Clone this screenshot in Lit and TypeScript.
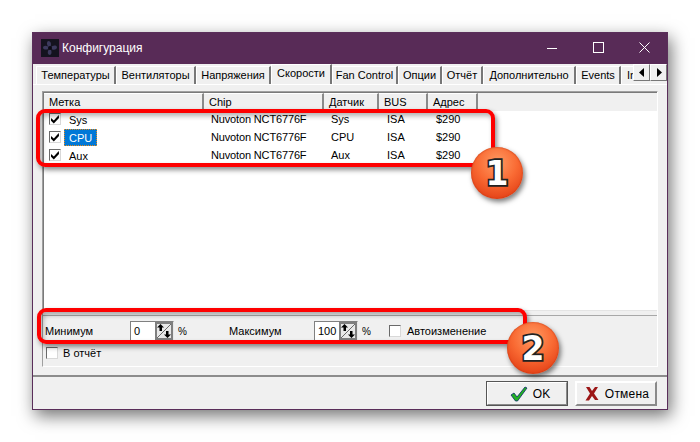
import { LitElement, html, css, svg } from "lit";
import { customElement } from "lit/decorators.js";

const TABS: [string, number][] = [
  ["Температуры", 80], ["Вентиляторы", 80], ["Напряжения", 75], ["Скорости", 61], ["Fan Control", 66],
  ["Опции", 44], ["Отчёт", 41], ["Дополнительно", 93], ["Events", 45],
];
const COLS: [string, number][] = [["Метка", 160], ["Chip", 120], ["Датчик", 55], ["BUS", 49], ["Адрес", 50]];
const ROWS = ["Sys", "CPU", "Aux"];

const tick = svg`<path d="M2 5 L4.8 7.4 L9.8 2 L10 5 L4.8 10.6 L2 7.8 Z" fill="#000"/>`;

@customElement("app-root")
export class AppRoot extends LitElement {
  static styles = css`
    :host { display: block; position: relative; width: 700px; height: 442px; overflow: hidden; background: #fff;
      font: 11px "Liberation Sans", Arial, sans-serif; color: #000; }
    .stage { padding: 32px; box-sizing: border-box; height: 442px; }
    .window { width: 636px; height: 378px; box-sizing: border-box; background: #f0f0f0; border: 1px solid #5a2e5a;
      display: flex; flex-direction: column; box-shadow: 3px 6px 16px rgba(0,0,0,.55); }
    .title { height: 31px; flex: none; background: #582b57; display: flex; align-items: center; color: #fff;
      font-size: 12px; padding-left: 8px; padding-bottom: 2px; box-sizing: border-box; }
    .title .ico { width: 18px; height: 18px; margin-right: 3px; }
    .title .name { flex: 1; }
    .wc { width: 46px; height: 28px; display: flex; align-items: center; justify-content: center; }
    .wc svg { display: block; }
    .tabs { display: flex; height: 20px; flex: none; align-items: flex-end; }
    .tabstrip { flex: 1; min-width: 0; display: flex; padding-left: 3px; height: 20px; align-items: flex-end; }
    .tab { flex: none; box-sizing: border-box; height: 18px; line-height: 17px; text-align: center; white-space: nowrap;
      background: #f0f0f0; border-top: 1px solid #fff; border-left: 1px solid #fff; border-right: 2px solid #777; }
    .tab.active { height: 20px; line-height: 17px; }
    .tab.last { border-right: 0; padding-left: 5px; text-align: left; width: 12px; }
    .arrows { flex: none; display: flex; align-self: flex-start; height: 17px; position: relative; z-index: 1; }
    .arrow { width: 17px; height: 17px; box-sizing: border-box; background: #f0f0f0; display: flex; align-items: center; justify-content: center;
      border-top: 1px solid #fff; border-left: 1px solid #fff; border-right: 1px solid #777; border-bottom: 1px solid #777; }
    .page { flex: 1; min-height: 0; padding: 6px 9px 8px 9px; display: flex; flex-direction: column; border-top: 1px solid #fff; }
    .frame { flex: 1; min-height: 0; display: flex; flex-direction: column; border-right: 1px solid #fff; border-bottom: 1px solid #fff; border-left: 1px solid #a0a0a0; border-top: 1px solid #a0a0a0; }
    .list { height: 219px; flex: none; box-sizing: border-box; background: #fff; border-top: 1px solid #7a7a7a; border-left: 1px solid #7a7a7a; border-bottom: 1px solid #e4e4e4; display: flex; flex-direction: column; }
    .head { display: flex; height: 18px; flex: none; background: #f0f0f0; }
    .hcell { flex: none; box-sizing: border-box; padding-left: 5px; line-height: 17px; border-right: 2px solid #8a8a8a; border-top: 1px solid #fff; }
    .rows { margin-top: -1px; }
    .row { display: flex; height: 18px; align-items: center; }
    .c0 { width: 160px; display: flex; align-items: center; padding-left: 5px; box-sizing: border-box; }
    .c1 { width: 120px; padding-left: 7px; box-sizing: border-box; letter-spacing: -.15px; }
    .c2 { width: 55px; padding-left: 7px; box-sizing: border-box; }
    .c3 { width: 49px; padding-left: 8px; box-sizing: border-box; }
    .c4 { width: 50px; padding-left: 8px; box-sizing: border-box; }
    .check { width: 12px; height: 12px; box-sizing: border-box; flex: none; background: #fff; border: 1px solid; border-color: #6a6a6a #d8d8d8 #d8d8d8 #6a6a6a; display: block; }
    .check svg { display: block; margin: -1px 0 0 -1px; }
    .rlabel { margin-left: 3px; padding: 0 4px; height: 17px; line-height: 16px; box-sizing: border-box; border: 1px solid transparent; }
    .rlabel.sel { background: #0078d7; color: #fff; border: 1px dotted #e88a1a; }
    .bar { border-top: 1px solid #a8a8a8; margin-top: 4px; flex: none; height: 24px; display: flex; align-items: center; padding-left: 2px; padding-top: 3px; }
    .lmin, .lmax { width: 85px; flex: none; }
    .spin { width: 44px; height: 20px; box-sizing: border-box; flex: none; background: #fff; display: flex; justify-content: space-between; align-items: center;
      border: 1px solid; border-color: #808080 #e8e8e8 #e8e8e8 #808080; padding-left: 3px; font-size: 11px; }
    .spin svg { display: block; }
    .pct1 { width: 51px; flex: none; margin-left: 4px; font-size: 10px; }
    .pct2 { width: 27px; flex: none; margin-left: 4px; font-size: 10px; }
    .auto { margin-left: 6px; }
    .report { display: flex; align-items: center; gap: 5px; padding: 4px 0 0 3px; }
    .foot { height: 34px; flex: none; box-sizing: border-box; border-top: 2px solid #8c8c8c; display: flex; justify-content: flex-end; gap: 7px; padding: 4px 10px 0 0; }
    .btn { width: 82px; height: 25px; box-sizing: border-box; display: flex; align-items: center; justify-content: center; gap: 5px; font-size: 12px; background: #f0f0f0;
      border: 2px solid; border-color: #fff #8a8a8a #8a8a8a #fff; }
    .btn.def { outline: 1px solid #555; outline-offset: -1px; padding-left: 6px; }
    .btn.cancel { padding-left: 2px; letter-spacing: .2px; gap: 6px; }
    .mark { position: absolute; box-sizing: border-box; border: 4px solid #fe0000; border-radius: 9px;
      box-shadow: 2px 3px 5px rgba(0,0,0,.45), inset 2px 3px 5px rgba(0,0,0,.3); pointer-events: none; }
    .m1 { left: 36px; top: 109px; width: 459px; height: 58px; }
    .m2 { left: 37px; top: 308px; width: 490px; height: 36px; }
    .badge { position: absolute; width: 52px; height: 52px; border-radius: 50%; display: flex; align-items: center; justify-content: center;
      background: radial-gradient(circle at 50% 30%, #ff9a62 0%, #f96a33 45%, #e03a12 90%);
      box-shadow: 2px 3px 5px rgba(0,0,0,.5), inset 0 0 2px #b8300c;
      font: bold 33px "DejaVu Sans", sans-serif; color: #fff; -webkit-text-stroke: 3.5px #222; paint-order: stroke fill; }
    .b1 { left: 471px; top: 147px; }
    .b2 { left: 507px; top: 322px; }
  `;

  private check(on: boolean) {
    return html`<span class="check">${on ? html`<svg width="12" height="12" viewBox="0 0 12 12">${tick}</svg>` : ""}</span>`;
  }

  private spinner(v: string) {
    return html`<div class="spin"><span>${v}</span>
      <svg width="18" height="18" viewBox="0 0 18 18">
        <rect x="1" y="1" width="16" height="16" fill="#e8e8e8" stroke="#7f7f7f" stroke-width="2"/>
        <path d="M2 16 L16 2" stroke="#6a6a6a" fill="none"/>
        <path d="M5.5 2 L9 5.5 L7 5.5 L7 9 L4.5 9 L4.5 5.5 L2 5.5 Z" fill="#000"/>
        <path d="M12.5 16 L9 12.5 L11 12.5 L11 9 L13.5 9 L13.5 12.5 L16 12.5 Z" fill="#000"/>
      </svg></div>`;
  }

  render() {
    return html`<div class="stage"><div class="window">
      <div class="title">
        <svg class="ico" viewBox="0 0 18 18"><rect width="18" height="18" fill="#15131f"/>
          <path d="M9 9 C6 7 5 4 7 2 C10 2 11 5 9 9 C12 6 15 6 16 8 C16 11 12 12 9 9 C11 12 11 15 9 16 C6 16 6 12 9 9 C6 11 3 11 2 9 C2 6 6 6 9 9Z" fill="#3d3a5e"/>
          <circle cx="9" cy="9" r="2" fill="#0c0a14"/></svg>
        <span class="name">Конфигурация</span>
        <span class="wc"><svg width="10" height="10" viewBox="0 0 10 10"><path d="M0 5.5H10" stroke="#fff"/></svg></span>
        <span class="wc"><svg width="11" height="11" viewBox="0 0 11 11"><rect x=".5" y=".5" width="10" height="10" fill="none" stroke="#fff"/></svg></span>
        <span class="wc"><svg width="11" height="11" viewBox="0 0 11 11"><path d="M.5 .5L10.5 10.5M10.5 .5L.5 10.5" stroke="#fff"/></svg></span>
      </div>
      <div class="tabs">
        <div class="tabstrip">${TABS.map(([t, w], i) => html`<div class="tab ${i === 3 ? "active" : ""}" style="width:${w}px">${t}</div>`)}<div class="tab last">In</div></div>
        <div class="arrows">
          <div class="arrow"><svg width="6" height="9" viewBox="0 0 6 9"><path d="M5 0V9L0 4.5Z"/></svg></div>
          <div class="arrow"><svg width="6" height="9" viewBox="0 0 6 9"><path d="M1 0V9L6 4.5Z"/></svg></div>
        </div>
      </div>
      <div class="page"><div class="frame">
        <div class="list">
          <div class="head">${COLS.map(([c, w]) => html`<div class="hcell" style="width:${w}px">${c}</div>`)}</div>
          <div class="rows">${ROWS.map((r) => html`<div class="row">
            <div class="c0">${this.check(true)}<span class="rlabel ${r === "CPU" ? "sel" : ""}">${r}</span></div>
            <div class="c1">Nuvoton NCT6776F</div><div class="c2">${r}</div><div class="c3">ISA</div><div class="c4">$290</div>
          </div>`)}</div>
        </div>
        <div class="bar">
          <span class="lmin">Минимум</span>${this.spinner("0")}<span class="pct1">%</span>
          <span class="lmax">Максимум</span>${this.spinner("100")}<span class="pct2">%</span>
          ${this.check(false)}<span class="auto">Автоизменение</span>
        </div>
        <div class="report">${this.check(false)}<span>В отчёт</span></div>
      </div></div>
      <div class="foot">
        <div class="btn def"><svg width="18" height="16" viewBox="0 0 18 16"><path d="M1 9 L4 7 L7 11 L15 1 L17 2 L7.5 15 L5.5 15 Z" fill="#22b022" stroke="#0a2a6a" stroke-width=".8"/></svg><span>OK</span></div>
        <div class="btn cancel"><svg width="14" height="15" viewBox="0 0 14 15"><path d="M1 1 H4.5 L7 5 L10 1 H13 L9 7.5 L13.5 14 H10 L7 10 L4 14.5 H.5 L5 7.5 Z" fill="#9c1616"/></svg><span>Отмена</span></div>
      </div>
    </div></div>
    <div class="mark m1"></div><div class="mark m2"></div>
    <div class="badge b1">1</div><div class="badge b2">2</div>`;
  }
}
